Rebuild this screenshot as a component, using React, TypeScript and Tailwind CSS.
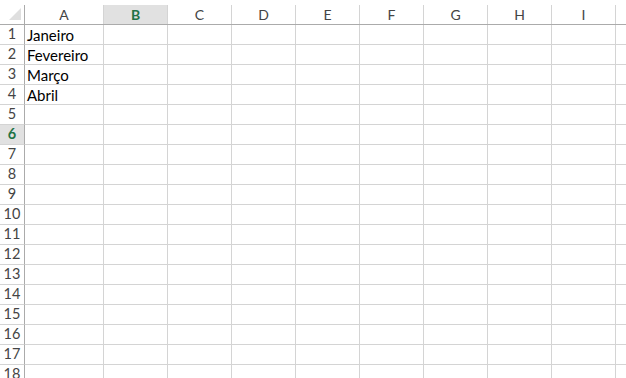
import React from 'react';

const columns = ['A', 'B', 'C', 'D', 'E', 'F', 'G', 'H', 'I', 'J'];
const values: Record<number, string> = { 1: 'Janeiro', 2: 'Fevereiro', 3: 'Março', 4: 'Abril' };
const rows = Array.from({ length: 18 }, (_, i) => i + 1);

function colWidth(col: string) {
  return col === 'A' ? 'w-[79px]' : 'w-[64px]';
}

export default function App() {
  return (
    <div
      className="w-[626px] h-[378px] overflow-hidden bg-white text-[#444444]"
      style={{ fontFamily: 'Lato, "Open Sans", sans-serif' }}
    >
      {/* column header */}
      <div className="flex h-[25px] border-b border-[#ababab]">
        <div className="w-[25px] shrink-0 pt-[5px]">
          <div className="h-full border-r border-[#ababab] relative">
            <svg className="absolute left-[9px] top-[3px]" width="12" height="12" viewBox="0 0 12 12">
              <polygon points="0,12 12,12 12,0" fill="#dfdfdf" />
            </svg>
          </div>
        </div>
        {columns.map((col) => (
          <div key={col} className={`${colWidth(col)} shrink-0 pt-[5px]`}>
            <div
              className={`h-full border-r border-[#d4d4d4] flex items-center justify-center text-[14px] ${
                col === 'B' ? 'bg-[#e1e1e1] text-[#217346] font-bold' : ''
              }`}
            >
              {col === 'J' ? '' : col}
            </div>
          </div>
        ))}
      </div>

      {rows.map((row) => (
        <div key={row} className="flex h-[20px]">
          <div
            className={`w-[25px] shrink-0 border-r border-b border-r-[#ababab] border-b-[#d4d4d4] flex items-center justify-center text-[14.5px] leading-none ${
              row === 6 ? 'bg-[#e1e1e1] text-[#217346] font-bold' : ''
            }`}
          >
            {row}
          </div>
          {columns.map((col) => (
            <div
              key={col}
              className={`${colWidth(col)} shrink-0 border-r border-b border-[#d4d4d4] px-[2px] flex items-end text-[15px] leading-[18px] text-black whitespace-nowrap overflow-hidden`}
            >
              {col === 'A' ? values[row] ?? '' : ''}
            </div>
          ))}
        </div>
      ))}
    </div>
  );
}
